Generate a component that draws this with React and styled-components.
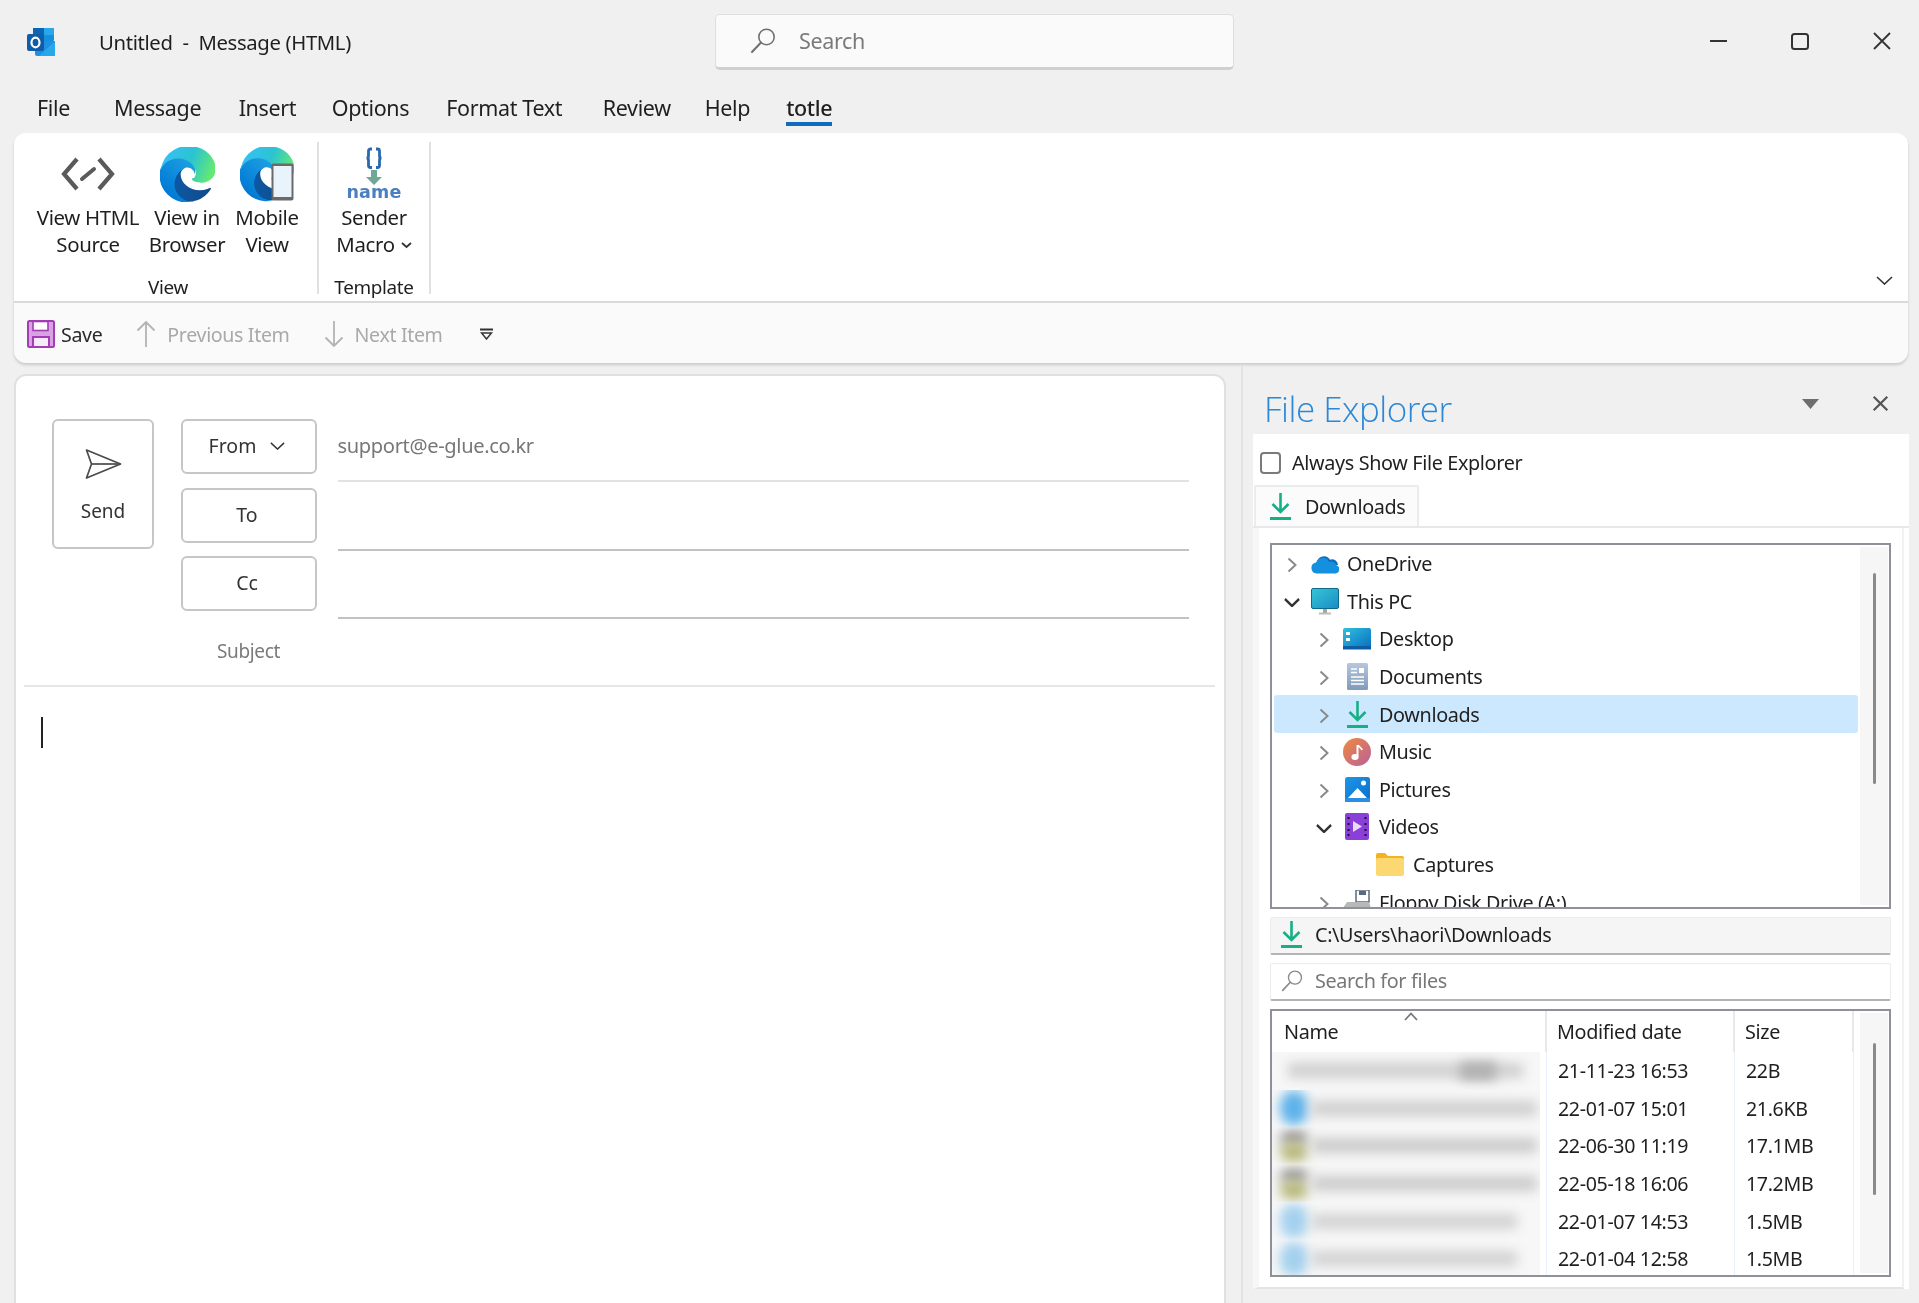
import React from "react";
import styled, { createGlobalStyle } from "styled-components";

const Global = createGlobalStyle`
  html, body { margin: 0; padding: 0; background: #f0f0f0; }
  * { box-sizing: border-box; }
  svg { flex: none; }
  body { font-family: "Noto Sans", "Open Sans", Arial, sans-serif; color: #1f1f1f; }
`;

const Page = styled.div`
  width: 1919px;
  height: 1303px;
  overflow: hidden;
  background: #f0f0f0;
  display: flex;
  flex-direction: column;
  font-size: 19.8px;
  letter-spacing: -0.35px;
  filter: blur(0.4px);
`;

/* ---------- title bar ---------- */
const TitleBar = styled.header`
  height: 84px;
  display: flex;
  align-items: center;
  padding-left: 27px;
  flex: none;
`;
const TitleLeft = styled.div`
  width: 688px;
  display: flex;
  align-items: center;
  gap: 44px;
`;
const TitleText = styled.span`
  font-size: 20.3px;
  white-space: pre;
`;
const SearchBox = styled.div`
  width: 519px;
  height: 56px;
  margin-top: -1px;
  background: #fafafa;
  border: 1px solid #dedede;
  border-bottom: 3px solid #cfcfcf;
  border-radius: 5px;
  display: flex;
  align-items: center;
  padding-left: 34px;
  gap: 23px;
  color: #7a7a7a;
  font-size: 21.5px;
`;
const WindowControls = styled.div`
  margin-left: auto;
  display: flex;
  align-items: center;
  padding: 0 27px 2px 0;
  gap: 63px;
`;

/* ---------- tabs ---------- */
const TabRow = styled.nav`
  height: 49px;
  flex: none;
  display: flex;
  padding-left: 37px;
`;
const Tab = styled.span`
  margin-left: ${(p) => p.$gap || 0}px;
  height: 42px;
  padding-top: 9px;
  font-size: 21.5px;
  white-space: pre;
  line-height: 30px;
  border-bottom: ${(p) => (p.$active ? "4px solid #0f6cbd" : "none")};
  font-weight: ${(p) => (p.$active ? 500 : 400)};
`;

/* ---------- ribbon ---------- */
const Ribbon = styled.section`
  margin: 0 11px 0 14px;
  flex: none;
  border-radius: 12px;
  background: #fafafa;
  box-shadow: 0 2px 3px rgba(0, 0, 0, 0.16);
  overflow: hidden;
`;
const RibbonBody = styled.div`
  height: 170px;
  background: #fff;
  border-bottom: 2px solid #d9d9d9;
  display: flex;
  position: relative;
`;
const Group = styled.div`
  width: ${(p) => p.$w}px;
  display: flex;
  flex-direction: column;
  align-items: center;
  position: relative;
  padding: 11px 0 0 ${(p) => p.$pad || 0}px;
`;
const GroupButtons = styled.div`
  display: flex;
  justify-content: center;
  height: 131px;
  gap: ${(p) => p.$gap || 0}px;
`;
const GroupLabel = styled.span`
  font-size: 18.9px;
  line-height: 24px;
`;
const GroupDivider = styled.span`
  width: 2px;
  height: 152px;
  margin-top: 9px;
  background: #e0e0e0;
`;
const RibbonButton = styled.div`
  width: ${(p) => p.$w}px;
  display: flex;
  flex-direction: column;
  align-items: center;
  line-height: 27.4px;
  text-align: center;
  white-space: nowrap;
  font-size: 20.4px;
`;
const BigIcon = styled.div`
  height: 60px;
  display: flex;
  align-items: center;
  justify-content: center;
`;
const BigLabel = styled.span`
  display: flex;
  align-items: center;
  gap: 6px;
`;
const Collapse = styled.span`
  position: absolute;
  right: 15px;
  top: 143px;
  display: flex;
`;
const QuickBar = styled.div`
  height: 60px;
  display: flex;
  align-items: center;
  padding: 2px 0 0 13px;
`;
const QuickItem = styled.span`
  display: flex;
  align-items: center;
  gap: ${(p) => p.$iconGap || 6}px;
  margin-left: ${(p) => p.$ml || 0}px;
  color: ${(p) => (p.$muted ? "#a9a9a9" : "#2a2a2a")};
  font-size: 19.6px;
`;

/* ---------- main ---------- */
const Main = styled.main`
  flex: 1;
  display: flex;
  padding-top: 1px;
  min-height: 0;
`;
const Compose = styled.section`
  margin: 10px 15px 0 14px;
  width: 1212px;
  height: 1000px;
  background: #fff;
  border: 2px solid #e0e0e0;
  border-radius: 12px 12px 0 0;
  flex: none;
`;
const Header = styled.div`
  display: flex;
  align-items: flex-start;
  padding: 36.5px 35px 0 36px;
`;
const SendButton = styled.button`
  width: 102px;
  height: 130px;
  margin-top: 6.5px;
  background: #fff;
  border: 2px solid #c6c6c6;
  border-radius: 6px;
  font: inherit;
  color: #333;
  display: flex;
  flex-direction: column;
  align-items: center;
  padding: 27px 0 0;
  gap: 18px;
  font-size: 19px;
`;
const Labels = styled.div`
  width: 136px;
  margin: 6.5px 0 0 26.5px;
  display: flex;
  flex-direction: column;
  gap: 13.5px;
`;
const LabelButton = styled.button`
  height: 55px;
  background: #fff;
  border: 2px solid #c6c6c6;
  border-radius: 6px;
  font: inherit;
  color: #333;
  display: flex;
  align-items: center;
  justify-content: center;
  gap: 14px;
  padding: 0 3px 2px 0;
  font-size: 19.5px;
`;
const SubjectLabel = styled.span`
  height: 60px;
  line-height: 53px;
  text-align: center;
  color: #7a7a7a;
  font-size: 19px;
`;
const Fields = styled.div`
  flex: 1;
  margin: 1px 0 0 21px;
`;
const Field = styled.div`
  height: 68.5px;
  display: flex;
  align-items: center;
  padding-bottom: ${(p) => (p.$light ? 2 : 0)}px;
  border-bottom: 2px solid ${(p) => (p.$light ? "#e2e2e2" : "#c4c2c0")};
  color: #777;
  font-size: 20.1px;
`;
const Divider = styled.div`
  height: 2px;
  margin: 0 9px 0 8px;
  background: #e6e6e6;
`;
const Body = styled.div`
  padding: 30px 0 0 25px;
`;
const Caret = styled.span`
  display: block;
  width: 2px;
  height: 31px;
  background: #222;
`;

/* ---------- file explorer ---------- */
const Pane = styled.aside`
  flex: 1;
  border-left: 2px solid #e3e3e3;
  margin-top: 2px;
  min-width: 0;
  display: flex;
  flex-direction: column;
`;
const PaneHeader = styled.div`
  height: 68px;
  flex: none;
  display: flex;
  align-items: flex-end;
  padding: 0 30px 0 21px;
  position: relative;
`;
const PaneTitle = styled.h2`
  margin: 0 0 3px;
  font-weight: 300;
  font-size: 35px;
  line-height: 44px;
  letter-spacing: -0.5px;
  color: #2b88d8;
  font-family: "Open Sans", "Noto Sans", sans-serif;
`;
const PaneActions = styled.div`
  margin-left: auto;
  display: flex;
  align-items: center;
  gap: 53px;
  margin-bottom: 22px;
`;
const PaneWhite = styled.div`
  height: 855px;
  margin: 0 10px 0 10px;
  background: #fff;
  display: flex;
  flex-direction: column;
`;
const CheckRow = styled.label`
  height: 51px;
  flex: none;
  display: flex;
  align-items: center;
  gap: 11px;
  padding: 6px 0 0 7px;
`;
const CheckBox = styled.span`
  width: 21px;
  height: 22px;
  border: 2px solid #7a7a7a;
  border-radius: 4px;
  background: #fff;
`;
const PaneTabs = styled.div`
  height: 43px;
  flex: none;
  display: flex;
  border-bottom: 2px solid #e8e8e8;
`;
const PaneTab = styled.div`
  width: 165px;
  margin-left: 1px;
  display: flex;
  align-items: center;
  gap: 14px;
  padding-left: 14px;
  background: #fbfbfb;
  border: 2px solid #ececec;
  border-bottom: none;
  border-radius: 2px 2px 0 0;
`;
const TabPanel = styled.div`
  flex: 1;
  margin-right: 5px;
  padding: 15px 11px 0 11px;
  border-left: 6px solid #f7f7f7;
  border-right: 2px solid #f1f1f1;
  border-bottom: 2px solid #e4e4e4;
  display: flex;
  flex-direction: column;
`;
const TreeBox = styled.div`
  height: 366px;
  flex: none;
  border: 2px solid #8e9298;
  display: flex;
  overflow: hidden;
  padding-right: 1px;
`;
const Tree = styled.div`
  flex: 1;
  overflow: hidden;
  padding: 0 2px;
`;
const TreeRow = styled.div`
  height: 37.6px;
  flex: none;
  display: flex;
  align-items: center;
  padding-left: ${(p) => 13 + p.$depth * 32}px;
  background: ${(p) => (p.$selected ? "#cce8ff" : "transparent")};
  border-radius: 3px;
  white-space: nowrap;
`;
const ChevronSlot = styled.span`
  width: 10px;
  display: flex;
  justify-content: center;
  margin-top: 3px;
`;
const TreeIcon = styled.span`
  width: 28px;
  height: 28px;
  margin: ${(p) => (p.$leaf ? "0 9px 0 25px" : "0 8px 0 14px")};
  display: flex;
  align-items: center;
  justify-content: center;
`;
const ScrollTrack = styled.div`
  width: 28px;
  flex: none;
  background: #f6f6f6;
  margin: 2px 0;
  display: flex;
  justify-content: center;
  padding-top: ${(p) => p.$top}px;
`;
const ScrollThumb = styled.span`
  display: block;
  width: 3px;
  height: ${(p) => p.$h}px;
  background: #8a8a8a;
  border-radius: 2px;
`;
const PathBar = styled.div`
  height: 38px;
  margin-top: 8px;
  flex: none;
  background: #f5f5f5;
  border: 1px solid #ececec;
  border-bottom: 2px solid #b4b4b4;
  border-radius: 2px;
  display: flex;
  align-items: center;
  gap: 13px;
  padding: 0 0 2px 10px;
`;
const SearchFiles = styled(PathBar)`
  background: #fff;
  color: #777;
  gap: 12px;
`;
const FileList = styled.div`
  height: 268px;
  margin-top: 8px;
  flex: none;
  border: 2px solid #8e9298;
  display: flex;
  overflow: hidden;
  padding-right: 1px;
`;
const Table = styled.div`
  flex: 1;
  display: flex;
  flex-direction: column;
  overflow: hidden;
  position: relative;
`;
const HeadRow = styled.div`
  height: 41px;
  flex: none;
  display: grid;
  grid-template-columns: 275px 188px 119px;
  position: relative;
`;
const HeadCell = styled.div`
  display: flex;
  align-items: center;
  padding-left: ${(p) => p.$pad}px;
  border-right: 2px solid #e8e8e8;
`;
const SortCaret = styled.span`
  position: absolute;
  left: 132px;
  top: 1px;
  display: flex;
`;
const FileRow = styled.div`
  height: 37.6px;
  flex: none;
  display: grid;
  grid-template-columns: 275px 188px 119px;
`;
const NameCell = styled.div`
  margin-right: 7px;
  background: #f7f7f7;
  position: relative;
  overflow: hidden;
  display: flex;
  align-items: center;
`;
const BlurBlob = styled.span`
  position: absolute;
  left: 8px;
  width: 28px;
  height: ${(p) => p.$h || 34}px;
  margin-top: ${(p) => p.$t || 0}px;
  border-radius: 45%;
  background: ${(p) => p.$c};
  filter: blur(6px);
`;
const BlurLine = styled.span`
  position: absolute;
  left: ${(p) => p.$l}px;
  width: ${(p) => p.$w}px;
  height: ${(p) => p.$h || 15}px;
  margin-top: ${(p) => p.$t || 0}px;
  background: ${(p) => p.$c || "#bdbdbd"};
  filter: blur(6px);
`;
const DateCell = styled.div`
  padding-left: 11px;
  display: flex;
  align-items: center;
  border-left: 1px solid #e6f1fb;
  margin-left: -1px;
  font-size: 19.6px;
`;
const SizeCell = styled(DateCell)`
  border-right: 1px solid #e6f1fb;
`;

/* ---------- icons ---------- */
const OutlookLogo = () => (
  <svg width="28" height="28" viewBox="0 0 28 28">
    <rect x="6" y="0" width="21" height="13" rx="1" fill="#1490df" />
    <rect x="6" y="0" width="11" height="7" fill="#0a66b5" />
    <rect x="17" y="0" width="10" height="7" fill="#28a8ea" />
    <path d="M8 13h20v13a2 2 0 0 1-2 2H10a2 2 0 0 1-2-2z" fill="#1f8fe0" />
    <path d="M28 13v15H12z" fill="#28a8ea" />
    <rect x="0" y="6" width="17" height="17" rx="2" fill="#0f5da8" />
    <ellipse cx="8.5" cy="14.5" rx="4" ry="4.8" fill="none" stroke="#fff" strokeWidth="2.2" />
  </svg>
);
const MagnifierIcon = ({ s = 26, c = "#707070" }) => (
  <svg width={s} height={s} viewBox="0 0 26 26" fill="none">
    <circle cx="16.5" cy="9" r="7.7" stroke={c} strokeWidth="1.6" />
    <path d="M11 14.5 2 24" stroke={c} strokeWidth="2" strokeLinecap="round" />
  </svg>
);
const MinIcon = () => (
  <svg width="19" height="4" viewBox="0 0 19 4"><path d="M1 2h17" stroke="#333" strokeWidth="2" /></svg>
);
const MaxIcon = () => (
  <svg width="18" height="17" viewBox="0 0 18 17"><rect x="1" y="1" width="16" height="15" rx="2.5" fill="none" stroke="#333" strokeWidth="2" /></svg>
);
const CloseIcon = ({ s = 20, w = 1.8, c = "#333" }) => (
  <svg width={s} height={s} viewBox="0 0 20 20"><path d="M2 2l16 16M18 2 2 18" stroke={c} strokeWidth={w} /></svg>
);
const ChevronDown = ({ w = 17, h = 9, c = "#333", sw = 1.6 }) => (
  <svg width={w} height={h} viewBox="0 0 17 9" preserveAspectRatio="none" fill="none">
    <path d="M1 1l7.5 7L16 1" stroke={c} strokeWidth={sw} />
  </svg>
);
const ChevronUp = () => (
  <svg width="14" height="9" viewBox="0 0 14 9" fill="none">
    <path d="M1 8l6-6.5L13 8" stroke="#777" strokeWidth="1.8" />
  </svg>
);
const ChevronRight = () => (
  <svg width="10" height="16" viewBox="0 0 10 16" fill="none"><path d="M1.5 1.5 8.5 8l-7 6.5" stroke="#8a8a8a" strokeWidth="2" /></svg>
);
const CodeIcon = () => (
  <svg width="54" height="34" viewBox="0 0 54 34" fill="none" stroke="#5a5a5a">
    <path d="M16 2 3 17l13 15" strokeWidth="4.2" />
    <path d="M38 2l13 15-13 15" strokeWidth="4.2" />
    <path d="M21 22 33 12" strokeWidth="4" strokeLinecap="round" />
  </svg>
);
const EdgeDefs = ({ id }) => (
  <defs>
    <linearGradient id={`${id}a`} x1="63" y1="190" x2="240" y2="190" gradientUnits="userSpaceOnUse">
      <stop offset="0" stopColor="#0c59a4" />
      <stop offset="1" stopColor="#114a8b" />
    </linearGradient>
    <linearGradient id={`${id}b`} x1="160" y1="100" x2="40" y2="230" gradientUnits="userSpaceOnUse">
      <stop offset="0" stopColor="#1b9de2" />
      <stop offset="1" stopColor="#0078d4" />
    </linearGradient>
    <linearGradient id={`${id}c`} x1="30" y1="40" x2="250" y2="130" gradientUnits="userSpaceOnUse">
      <stop offset="0" stopColor="#35c1f1" />
      <stop offset="0.5" stopColor="#2bc3d2" />
      <stop offset="1" stopColor="#66eb6e" />
    </linearGradient>
  </defs>
);
const EdgeShape = ({ id }) => (
  <g transform="translate(-4.63 -4.92)">
    <path d="M235.68 195.46a93.73 93.73 0 0 1-10.54 4.71 101.87 101.87 0 0 1-35.9 6.46c-47.32 0-88.54-32.55-88.54-74.32A31.48 31.48 0 0 1 117.13 105c-42.8 1.8-53.8 46.4-53.8 72.53 0 73.88 68.09 81.37 82.76 81.37 7.91 0 19.84-2.3 27-4.56l1.31-.44a128.34 128.34 0 0 0 66.6-52.8 4 4 0 0 0-5.32-5.64z" fill={`url(#${id}a)`} />
    <path d="M110.34 246.34A79.2 79.2 0 0 1 87.6 225a80.72 80.72 0 0 1 29.53-120c3.2-1.51 8.67-4.24 15.95-4.11a33.19 33.19 0 0 1 26.36 13.35 32.69 32.69 0 0 1 6.5 19.12c0-.22 25.11-81.73-82.13-81.73-45.07 0-82.13 42.77-82.13 80.3a133.66 133.66 0 0 0 12.43 57.5 128.42 128.42 0 0 0 156.9 67.32 75.78 75.78 0 0 1-60.6-10.21z" fill={`url(#${id}b)`} />
    <path d="M157.08 148.92c-.83 1.07-3.38 2.55-3.38 5.79 0 2.68 1.74 5.25 4.84 7.41 14.76 10.26 42.58 8.9 42.65 8.9a61.1 61.1 0 0 0 31.08-8.57 63 63 0 0 0 31.26-54.3c.27-23-8.21-38.29-11.63-45C230.15 21.58 184.45 0 134.76 0A128 128 0 0 0 6.76 126.2c.48-37.52 37.79-67.82 82.13-67.82 3.6 0 24.1.35 43.19 10.37 16.78 8.82 25.57 19.44 31.65 30 6.33 10.9 7.45 24.67 7.45 30.14s-2.8 13.6-8.1 20.03z" fill={`url(#${id}c)`} />
  </g>
);
const EdgeIcon = () => (
  <svg width="55" height="55" viewBox="0 0 256 256">
    <EdgeDefs id="e1" />
    <EdgeShape id="e1" />
  </svg>
);
const MobileIcon = () => (
  <svg width="54" height="55" viewBox="0 0 54 55">
    <EdgeDefs id="e2" />
    <g transform="scale(0.21)"><EdgeShape id="e2" /></g>
    <rect x="31.5" y="16.5" width="22" height="37" rx="2" fill="#6a6a6a" />
    <rect x="33.5" y="19" width="18" height="31" fill="#e8f3fb" />
  </svg>
);
const NameIcon = () => (
  <svg width="54" height="54" viewBox="0 0 54 54">
    <g fill="none" stroke="#2a68b0" strokeWidth="2.8">
      <path d="M25 2h-1.5a2 2 0 0 0-2 2v5a2 2 0 0 1-2 2 2 2 0 0 1 2 2v5.5a2 2 0 0 0 2 2H25" />
      <path d="M29 2h1.5a2 2 0 0 1 2 2v5a2 2 0 0 0 2 2 2 2 0 0 0-2 2v5.5a2 2 0 0 1-2 2H29" />
    </g>
    <path d="M24 23h6v7h5l-8 8-8-8h5z" fill="#6fa893" />
    <text x="27" y="51" textAnchor="middle" fontFamily="'DejaVu Sans', sans-serif" fontWeight="700" fontSize="17.5" letterSpacing="0.2" fill="#4a80bf">name</text>
  </svg>
);
const SmallChevron = () => (
  <svg width="11" height="7" viewBox="0 0 11 7" fill="none"><path d="M1 1l4.5 4L10 1" stroke="#333" strokeWidth="1.8" /></svg>
);
const SaveIcon = () => (
  <svg width="28" height="28" viewBox="0 0 28 28">
    <rect x="1" y="1" width="26" height="26" rx="1.5" fill="#d9a3e3" stroke="#a33cb5" strokeWidth="2" />
    <rect x="6" y="1.5" width="15" height="9" fill="#fff" stroke="#a33cb5" strokeWidth="1.6" />
    <rect x="6" y="17" width="16" height="10" fill="#f7eafa" stroke="#a33cb5" strokeWidth="2" />
  </svg>
);
const ArrowUp = () => (
  <svg width="20" height="28" viewBox="0 0 20 28" fill="none"><path d="M10 27V2M1.5 10.5 10 2l8.5 8.5" stroke="#b3b3b3" strokeWidth="1.8" /></svg>
);
const ArrowDown = () => (
  <svg width="20" height="28" viewBox="0 0 20 28" fill="none"><path d="M10 1v25M1.5 17.5 10 26l8.5-8.5" stroke="#b3b3b3" strokeWidth="1.8" /></svg>
);
const OverflowIcon = () => (
  <svg width="13" height="12" viewBox="0 0 13 12" fill="none"><path d="M0 1.5h13" stroke="#333" strokeWidth="1.8" /><path d="M1.5 5h10L6.5 11z" stroke="#333" strokeWidth="1.5" /></svg>
);
const SendIcon = () => (
  <svg width="37" height="32" viewBox="0 0 37 32" fill="none" stroke="#4a4a4a" strokeWidth="1.7" strokeLinejoin="round">
    <path d="M1.5 2 35.5 16 1.5 30 6.5 16z" />
    <path d="M6.5 16h29" />
  </svg>
);
const Triangle = () => (
  <svg width="17" height="10" viewBox="0 0 17 10"><path d="M0 0h17L8.5 10z" fill="#6e6e6e" /></svg>
);
const DownloadIcon = ({ w = 21, h = 27 }) => (
  <svg width={w} height={h} viewBox="0 0 21 27" fill="none" stroke="#16b087">
    <path d="M10.5 0v19M2.5 11l8 8 8-8" strokeWidth="2.6" />
    <path d="M0 25.5h21" strokeWidth="3" />
  </svg>
);
const OneDriveIcon = () => (
  <svg width="28" height="20" viewBox="0 0 28 20">
    <path d="M6 8.5a7 7 0 0 1 13-2.8A6 6 0 0 1 27 11H9z" fill="#0f6cbd" />
    <path d="M5.5 19.5A5.5 5.5 0 0 1 5 8.6 7 7 0 0 1 18 8a5.8 5.8 0 0 1 7.5 3.2 4.3 4.3 0 0 1-1 8.3z" fill="#1490df" />
  </svg>
);
const PcIcon = () => (
  <svg width="28" height="27" viewBox="0 0 28 27">
    <defs><linearGradient id="pc" x1="0" y1="0" x2="1" y2="1"><stop offset="0" stopColor="#36c6d3" /><stop offset="1" stopColor="#1a8cc8" /></linearGradient></defs>
    <rect x="0.5" y="0.5" width="27" height="20" rx="1.5" fill="url(#pc)" stroke="#0e6a8c" />
    <rect x="12" y="21" width="4" height="4" fill="#a5a5a5" />
    <rect x="8" y="24.5" width="12" height="2" fill="#bdbdbd" />
  </svg>
);
const DesktopIcon = () => (
  <svg width="28" height="22" viewBox="0 0 28 22">
    <defs><linearGradient id="dt" x1="0" y1="0" x2="1" y2="1"><stop offset="0" stopColor="#2fc0dd" /><stop offset="1" stopColor="#0a6cc0" /></linearGradient></defs>
    <rect width="28" height="21" rx="2" fill="url(#dt)" />
    <rect x="3" y="4" width="4" height="3" fill="#fff" />
    <rect x="3" y="10" width="4" height="3" fill="#fff" />
    <rect y="18" width="28" height="3.5" fill="#0e5ca4" />
  </svg>
);
const DocIcon = () => (
  <svg width="21" height="27" viewBox="0 0 21 27">
    <defs><linearGradient id="dc" x1="0" y1="0" x2="0" y2="1"><stop offset="0" stopColor="#b7c7dc" /><stop offset="1" stopColor="#7f9bbb" /></linearGradient></defs>
    <rect width="21" height="27" rx="1.5" fill="url(#dc)" />
    <path d="M4 6h6M4 9.5h6M4 14h13M4 17.5h13M4 21h13" stroke="#fff" strokeWidth="1.4" />
    <rect x="12" y="5" width="5" height="5" fill="#fff" />
  </svg>
);
const MusicIcon = () => (
  <svg width="28" height="28" viewBox="0 0 28 28">
    <defs><linearGradient id="mu" x1="0" y1="0" x2="1" y2="1"><stop offset="0" stopColor="#f08a3c" /><stop offset="1" stopColor="#b9609d" /></linearGradient></defs>
    <circle cx="14" cy="14" r="14" fill="url(#mu)" />
    <path d="M14.5 7v11.5" stroke="#fff" strokeWidth="2" />
    <ellipse cx="12" cy="19" rx="3.6" ry="3" fill="#fff" />
    <path d="M15 7c1 2.5 3.5 2.5 4 5" stroke="#fff" strokeWidth="1.8" fill="none" />
  </svg>
);
const PicturesIcon = () => (
  <svg width="25" height="25" viewBox="0 0 25 25">
    <defs><linearGradient id="pi" x1="0" y1="0" x2="1" y2="1"><stop offset="0" stopColor="#1d96e8" /><stop offset="1" stopColor="#0a6fc9" /></linearGradient></defs>
    <rect width="25" height="25" rx="2.5" fill="url(#pi)" />
    <circle cx="18.5" cy="6" r="2.5" fill="#fff" />
    <path d="M3 21 12.5 11 22 21z" fill="#fff" />
    <rect x="0" y="21" width="25" height="4" fill="#2a8fe0" />
  </svg>
);
const VideosIcon = () => (
  <svg width="24" height="27" viewBox="0 0 24 27">
    <rect width="24" height="27" rx="2" fill="#8a3fd9" />
    <path d="M8 8v11l9-5.5z" fill="#e8dcf8" />
    <path d="M2.5 5h2M2.5 11h2M2.5 17h2M2.5 22h2M19.5 5h2M19.5 11h2M19.5 17h2M19.5 22h2" stroke="#1a1030" strokeWidth="2" />
  </svg>
);
const FolderIcon = () => (
  <svg width="28" height="23" viewBox="0 0 28 23">
    <path d="M0 2a2 2 0 0 1 2-2h7l3 3h14a2 2 0 0 1 2 2v3H0z" fill="#f4b223" />
    <rect y="5" width="28" height="18" rx="2" fill="#fcd873" />
  </svg>
);
const FloppyIcon = () => (
  <svg width="28" height="24" viewBox="0 0 28 24">
    <rect x="13" y="0" width="13" height="12" fill="#fff" stroke="#5a6a7a" strokeWidth="1.5" />
    <rect x="16" y="1" width="7" height="4" fill="#5a6a7a" />
    <path d="M4 12h22l2 6H0z" fill="#b8b8b8" />
    <rect x="0" y="17" width="28" height="7" fill="#3c3c3c" />
    <rect x="3" y="19" width="3" height="2" fill="#3fce5c" />
  </svg>
);

const treeRows = [
  { label: "OneDrive", depth: 0, icon: <OneDriveIcon /> },
  { label: "This PC", depth: 0, open: true, icon: <PcIcon /> },
  { label: "Desktop", depth: 1, icon: <DesktopIcon /> },
  { label: "Documents", depth: 1, icon: <DocIcon /> },
  { label: "Downloads", depth: 1, icon: <DownloadIcon />, selected: true },
  { label: "Music", depth: 1, icon: <MusicIcon /> },
  { label: "Pictures", depth: 1, icon: <PicturesIcon /> },
  { label: "Videos", depth: 1, open: true, icon: <VideosIcon /> },
  { label: "Captures", depth: 2, leaf: true, icon: <FolderIcon /> },
  { label: "Floppy Disk Drive (A:)", depth: 1, icon: <FloppyIcon /> },
];

const files = [
  { date: "21-11-23 16:53", size: "22B", line: "#cfcfcf", patch: true },
  { date: "22-01-07 15:01", size: "21.6KB", blob: "#5db2ea", line: "#cfcfcf" },
  { date: "22-06-30 11:19", size: "17.1MB", blob: "#b9b97e", top: "#9a9a9a", line: "#cbcbcb" },
  { date: "22-05-18 16:06", size: "17.2MB", blob: "#b9b97e", top: "#9a9a9a", line: "#cbcbcb" },
  { date: "22-01-07 14:53", size: "1.5MB", blob: "#a3d0ee", line: "#d2d2d2", short: true },
  { date: "22-01-04 12:58", size: "1.5MB", blob: "#a3d0ee", line: "#d2d2d2", short: true },
];

const tabs = [
  ["File", 0], ["Message", 44], ["Insert", 37.5], ["Options", 35.5],
  ["Format Text", 37], ["Review", 40.5], ["Help", 34],
];

export default function App() {
  return (
    <Page>
      <Global />
      <TitleBar>
        <TitleLeft>
          <OutlookLogo />
          <TitleText>{"Untitled  -  Message (HTML)"}</TitleText>
        </TitleLeft>
        <SearchBox>
          <MagnifierIcon />
          <span>Search</span>
        </SearchBox>
        <WindowControls>
          <MinIcon />
          <MaxIcon />
          <CloseIcon />
        </WindowControls>
      </TitleBar>

      <TabRow>
        {tabs.map(([t, g]) => (
          <Tab key={t} $gap={g}>{t}</Tab>
        ))}
        <Tab $gap={36} $active>totle</Tab>
      </TabRow>

      <Ribbon>
        <RibbonBody>
          <Group $w={303} $pad={5}>
            <GroupButtons $gap={10}>
              <RibbonButton $w={106}>
                <BigIcon><CodeIcon /></BigIcon>
                <BigLabel>View HTML</BigLabel>
                <BigLabel>Source</BigLabel>
              </RibbonButton>
              <RibbonButton $w={72}>
                <BigIcon><EdgeIcon /></BigIcon>
                <BigLabel>View in</BigLabel>
                <BigLabel>Browser</BigLabel>
              </RibbonButton>
              <RibbonButton $w={68}>
                <BigIcon><MobileIcon /></BigIcon>
                <BigLabel>Mobile</BigLabel>
                <BigLabel>View</BigLabel>
              </RibbonButton>
            </GroupButtons>
            <GroupLabel>View</GroupLabel>
          </Group>
          <GroupDivider />
          <Group $w={110}>
            <GroupButtons>
              <RibbonButton $w={80}>
                <BigIcon><NameIcon /></BigIcon>
                <BigLabel>Sender</BigLabel>
                <BigLabel>Macro<SmallChevron /></BigLabel>
              </RibbonButton>
            </GroupButtons>
            <GroupLabel>Template</GroupLabel>
          </Group>
          <GroupDivider />
          <Collapse><ChevronDown /></Collapse>
        </RibbonBody>
        <QuickBar>
          <QuickItem><SaveIcon />Save</QuickItem>
          <QuickItem $muted $ml={34} $iconGap={11}><ArrowUp />Previous Item</QuickItem>
          <QuickItem $muted $ml={34} $iconGap={11}><ArrowDown />Next Item</QuickItem>
          <QuickItem $ml={37}><OverflowIcon /></QuickItem>
        </QuickBar>
      </Ribbon>

      <Main>
        <Compose>
          <Header>
            <SendButton>
              <SendIcon />
              Send
            </SendButton>
            <Labels>
              <LabelButton>From <ChevronDown w={15} h={8} /></LabelButton>
              <LabelButton>To</LabelButton>
              <LabelButton>Cc</LabelButton>
              <SubjectLabel>Subject</SubjectLabel>
            </Labels>
            <Fields>
              <Field $light>support@e-glue.co.kr</Field>
              <Field />
              <Field />
            </Fields>
          </Header>
          <Divider />
          <Body><Caret /></Body>
        </Compose>

        <Pane>
          <PaneHeader>
            <PaneTitle>File Explorer</PaneTitle>
            <PaneActions>
              <Triangle />
              <CloseIcon s={17} w={2.6} c="#555" />
            </PaneActions>
          </PaneHeader>
          <PaneWhite>
            <CheckRow>
              <CheckBox />
              Always Show File Explorer
            </CheckRow>
            <PaneTabs>
              <PaneTab><DownloadIcon />Downloads</PaneTab>
            </PaneTabs>
            <TabPanel>
              <TreeBox>
                <Tree>
                  {treeRows.map((r) => (
                    <TreeRow key={r.label} $depth={r.depth} $selected={r.selected}>
                      {r.leaf ? null : (
                        <ChevronSlot>
                          {r.open ? <ChevronDown w={16} h={9} sw={2.4} /> : <ChevronRight />}
                        </ChevronSlot>
                      )}
                      <TreeIcon $leaf={r.leaf}>{r.icon}</TreeIcon>
                      {r.label}
                    </TreeRow>
                  ))}
                </Tree>
                <ScrollTrack $top={26}><ScrollThumb $h={211} /></ScrollTrack>
              </TreeBox>
              <PathBar><DownloadIcon />{"C:\\Users\\haori\\Downloads"}</PathBar>
              <SearchFiles><MagnifierIcon s={22} c="#8a8a8a" />Search for files</SearchFiles>
              <FileList>
                <Table>
                  <HeadRow>
                    <HeadCell $pad={12}>Name</HeadCell>
                    <HeadCell $pad={10}>Modified date</HeadCell>
                    <HeadCell $pad={10}>Size</HeadCell>
                    <SortCaret><ChevronUp /></SortCaret>
                  </HeadRow>
                  {files.map((f) => (
                    <FileRow key={f.date}>
                      <NameCell>
                        {f.top && <BlurBlob $c={f.top} $h={16} $t={-16} />}
                        {f.blob && <BlurBlob $c={f.blob} $h={f.top ? 20 : 34} $t={f.top ? 12 : 0} />}
                        <BlurLine $l={f.blob ? 40 : 16} $w={f.short ? 205 : f.blob ? 225 : 235} $c={f.line} />
                        {f.patch && <BlurLine $l={188} $w={36} $h={18} $c="#b0b0b0" />}
                      </NameCell>
                      <DateCell>{f.date}</DateCell>
                      <SizeCell>{f.size}</SizeCell>
                    </FileRow>
                  ))}
                </Table>
                <ScrollTrack $top={30}><ScrollThumb $h={152} /></ScrollTrack>
              </FileList>
            </TabPanel>
          </PaneWhite>
        </Pane>
      </Main>
    </Page>
  );
}
